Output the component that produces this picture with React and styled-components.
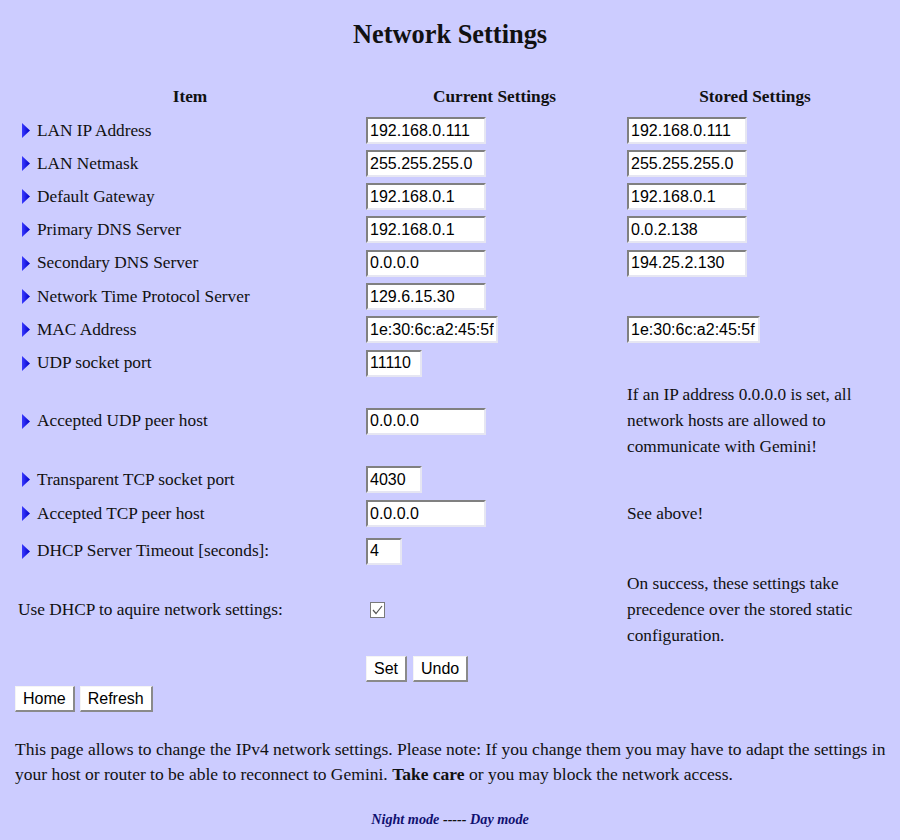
import React from "react";
import styled, { createGlobalStyle } from "styled-components";

const Global = createGlobalStyle`
  html, body { margin: 0; padding: 0; background: #ccccff; }
  body { font-family: "Liberation Serif", "Times New Roman", serif; color: #111; }
`;

const Page = styled.div`
  width: 900px;
  box-sizing: border-box;
  padding: 19px 15px 20px 15px;
`;

const Title = styled.h1`
  margin: 0;
  font-size: 26.4px;
  line-height: 30px;
  font-weight: bold;
  text-align: center;
  color: #111;
`;

const Grid = styled.div`
  display: grid;
  margin: 31px 0 0 3px;
  grid-template-columns: 344px 257px 256px;
  grid-template-rows: ${(p) => p.$rows};
  column-gap: 4px;
`;

const Head = styled.div`
  display: flex;
  align-items: center;
  justify-content: center;
  font-size: 17.3px;
  font-weight: bold;
`;

const Cell = styled.div`
  display: flex;
  align-items: center;
  font-size: 17.3px;
  line-height: 26px;
`;

const LabelCell = styled(Cell)`
  padding-left: ${(p) => (p.$plain ? "0" : "4px")};
  gap: 7px;
`;

const Note = styled(Cell)`
  line-height: 26px;
`;

const ButtonCell = styled(Cell)`
  align-items: flex-start;
  padding-top: 8px;
`;

const Field = styled.input`
  box-sizing: border-box;
  width: ${(p) => p.$w}px;
  height: 27px;
  margin: 0;
  padding: 0 2px;
  font-family: "Liberation Sans", Arial, sans-serif;
  font-size: 16px;
  color: #000;
  background: #fff;
  border-style: solid;
  border-width: 2px;
  border-color: #808080 #e6e6f2 #e6e6f2 #808080;
  outline: none;
`;

const CheckBox = styled.span`
  box-sizing: border-box;
  display: inline-flex;
  align-items: center;
  justify-content: center;
  width: 15px;
  height: 16px;
  margin-left: 4px;
  background: #fff;
  border: 1px solid #7a7a7a;
`;

const Btn = styled.button`
  box-sizing: border-box;
  height: 26px;
  padding: 0 7px;
  margin: 0;
  font-family: "Liberation Sans", Arial, sans-serif;
  font-size: 16px;
  color: #000;
  background: #fff;
  border-style: solid;
  border-width: 1px 2px 2px 1px;
  border-color: #f4f4f4 #8a8a8a #8a8a8a #f4f4f4;
  cursor: pointer;
`;

const BtnRow = styled.div`
  display: flex;
  gap: ${(p) => p.$gap}px;
`;

const Paragraph = styled.p`
  margin: 25px 0 0 0;
  font-size: 17.5px;
  line-height: 25px;
  white-space: nowrap;
`;

const Footer = styled.div`
  margin-top: 22px;
  text-align: center;
  font-size: 14.2px;
  line-height: 20px;
  font-weight: bold;
  font-style: italic;
`;

const ModeLink = styled.a`
  color: #101070;
  text-decoration: none;
`;

const Arrow = () => (
  <svg width="8" height="15" viewBox="0 0 8 15" aria-hidden="true">
    <defs>
      <linearGradient id="ag" x1="0" y1="0" x2="1" y2="0">
        <stop offset="0" stopColor="#3a3aff" />
        <stop offset="1" stopColor="#0000c8" />
      </linearGradient>
    </defs>
    <polygon points="0,0 8,7.5 0,15" fill="url(#ag)" />
  </svg>
);

const Check = () => (
  <svg width="11" height="10" viewBox="0 0 11 10" aria-hidden="true">
    <polyline points="1,5 4,8.5 10,1" fill="none" stroke="#555" strokeWidth="1.2" />
  </svg>
);

const rows = [
  { label: "LAN IP Address", cur: ["192.168.0.111", 120], st: ["192.168.0.111", 120] },
  { label: "LAN Netmask", cur: ["255.255.255.0", 120], st: ["255.255.255.0", 120] },
  { label: "Default Gateway", cur: ["192.168.0.1", 120], st: ["192.168.0.1", 120] },
  { label: "Primary DNS Server", cur: ["192.168.0.1", 120], st: ["0.0.2.138", 120] },
  { label: "Secondary DNS Server", cur: ["0.0.0.0", 120], st: ["194.25.2.130", 120] },
  { label: "Network Time Protocol Server", cur: ["129.6.15.30", 120] },
  { label: "MAC Address", cur: ["1e:30:6c:a2:45:5f", 132], st: ["1e:30:6c:a2:45:5f", 133] },
  { label: "UDP socket port", cur: ["11110", 56] },
  {
    label: "Accepted UDP peer host",
    cur: ["0.0.0.0", 120],
    note: ["If an IP address 0.0.0.0 is set, all", "network hosts are allowed to", "communicate with Gemini!"],
  },
  { label: "Transparent TCP socket port", cur: ["4030", 56] },
  { label: "Accepted TCP peer host", cur: ["0.0.0.0", 120], note: ["See above!"] },
  { label: "DHCP Server Timeout [seconds]:", cur: ["4", 36] },
  {
    label: "Use DHCP to aquire network settings:",
    plain: true,
    check: true,
    note: ["On success, these settings take", "precedence over the stored static", "configuration."],
  },
];

const heights = [34, 33, 33, 33, 33, 34, 33, 33, 34, 82, 35, 33, 42, 76, 38];

export default function App() {
  return (
    <>
      <Global />
      <Page>
        <Title>Network Settings</Title>
        <Grid $rows={heights.map((h) => h + "px").join(" ")}>
          <Head>Item</Head>
          <Head>Current Settings</Head>
          <Head>Stored Settings</Head>
          {rows.map((r, i) => (
            <React.Fragment key={i}>
              <LabelCell $plain={r.plain}>
                {!r.plain && <Arrow />}
                <span>{r.label}</span>
              </LabelCell>
              <Cell>
                {r.cur && <Field $w={r.cur[1]} defaultValue={r.cur[0]} />}
                {r.check && (
                  <CheckBox role="checkbox" aria-checked="true">
                    <Check />
                  </CheckBox>
                )}
              </Cell>
              {r.note ? (
                <Note>
                  <span>
                    {r.note.map((l, j) => (
                      <React.Fragment key={j}>
                        {j > 0 && <br />}
                        {l}
                      </React.Fragment>
                    ))}
                  </span>
                </Note>
              ) : (
                <Cell>{r.st && <Field $w={r.st[1]} defaultValue={r.st[0]} />}</Cell>
              )}
            </React.Fragment>
          ))}
          <Cell />
          <ButtonCell>
            <BtnRow $gap={6}>
              <Btn>Set</Btn>
              <Btn>Undo</Btn>
            </BtnRow>
          </ButtonCell>
          <Cell />
        </Grid>
        <BtnRow $gap={5}>
          <Btn>Home</Btn>
          <Btn>Refresh</Btn>
        </BtnRow>
        <Paragraph>
          This page allows to change the IPv4 network settings. Please note: If you change them you may have to adapt the settings in
          <br />
          your host or router to be able to reconnect to Gemini. <b>Take care</b> or you may block the network access.
        </Paragraph>
        <Footer>
          <ModeLink href="#">Night mode</ModeLink> ----- <ModeLink href="#">Day mode</ModeLink>
        </Footer>
      </Page>
    </>
  );
}
